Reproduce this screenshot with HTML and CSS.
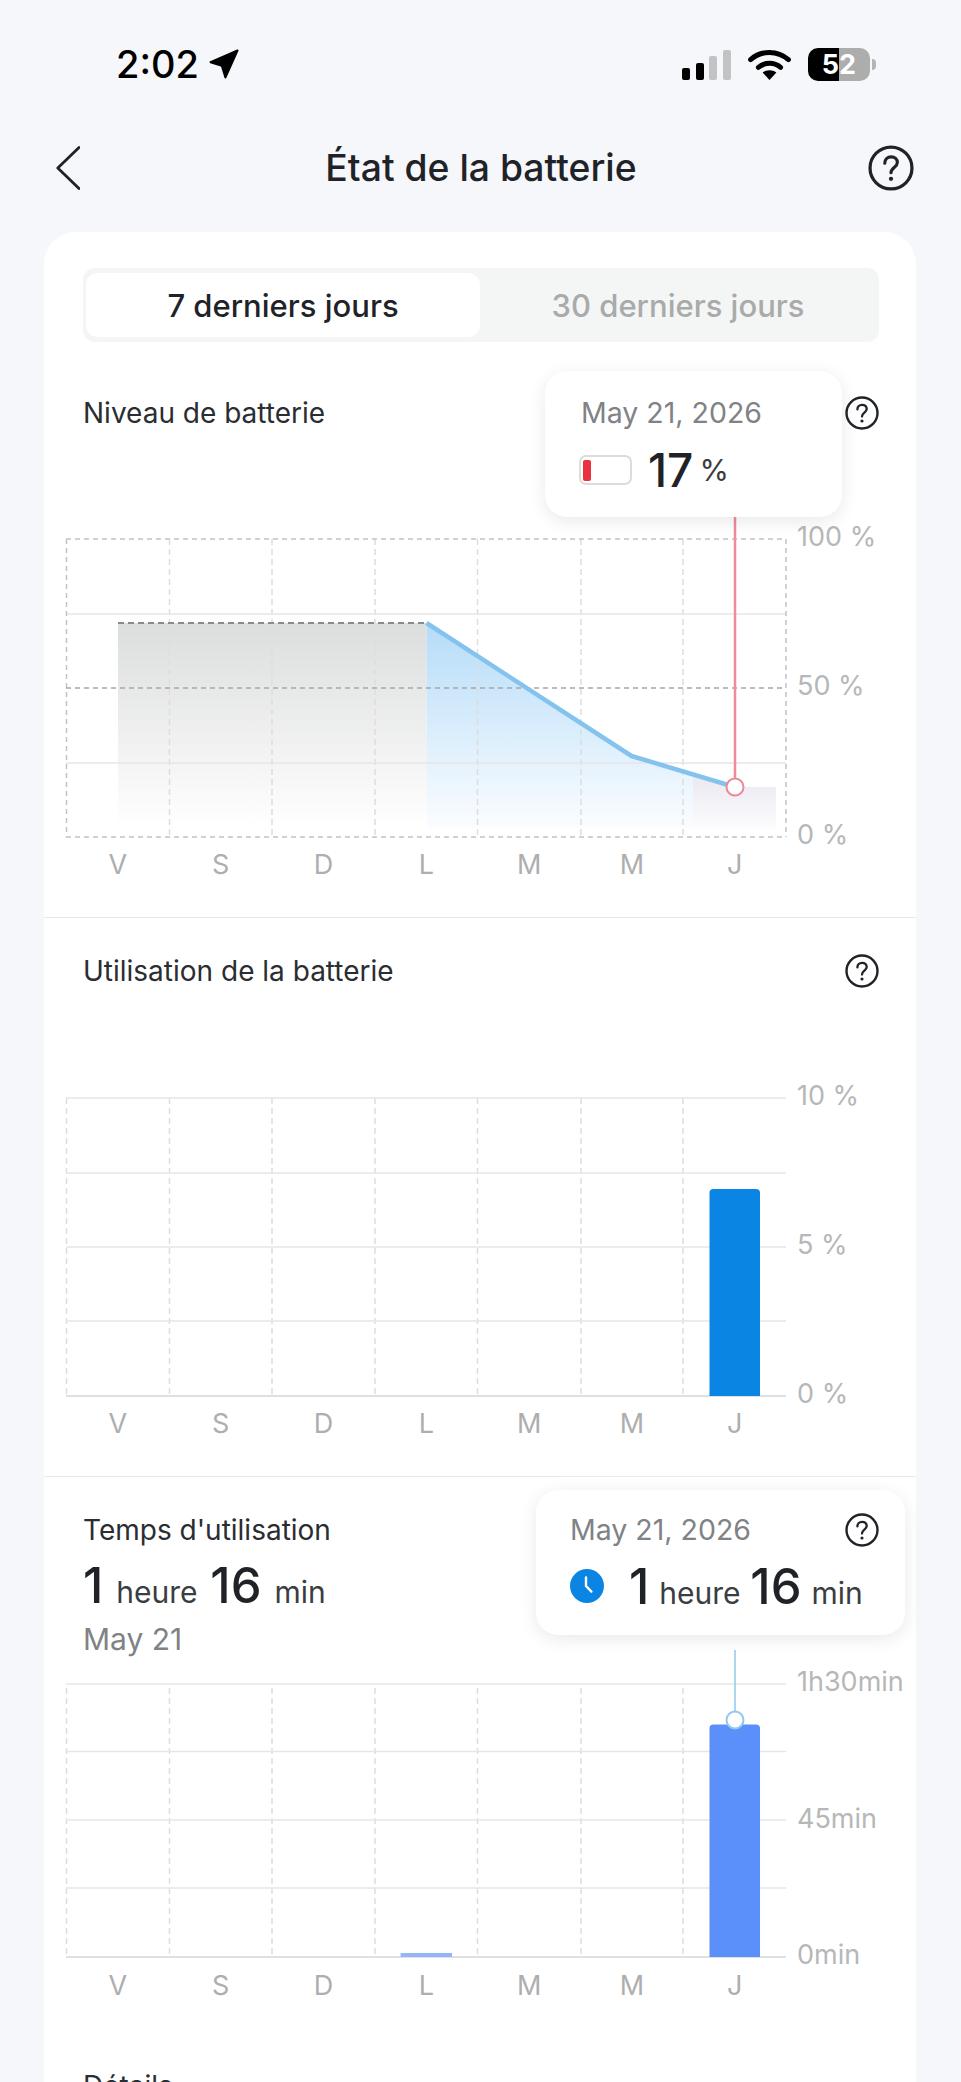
FILE: index.html
```html
<!DOCTYPE html>
<html lang="fr">
<head>
<meta charset="utf-8">
<title>État de la batterie</title>
<link rel="stylesheet" href="styles.css">
</head>
<body>
<svg class="defs" width="0" height="0" aria-hidden="true">
  <defs>
    <symbol id="help" viewBox="0 0 34 34">
      <circle cx="17" cy="17" r="15.5" fill="none" stroke="#1f2328" stroke-width="2.4"/>
      <path d="M12.4 13.4c0-2.8 2-4.6 4.7-4.6s4.6 1.7 4.6 4.1c0 3.6-4.7 3.9-4.7 7.6" fill="none" stroke="#1f2328" stroke-width="2.3" stroke-linecap="round"/>
      <circle cx="17" cy="25" r="1.6" fill="#1f2328"/>
    </symbol>
    <linearGradient id="grayFill" x1="0" y1="0" x2="0" y2="1">
      <stop offset="0" stop-color="#dcdddd"/><stop offset="1" stop-color="#ffffff"/>
    </linearGradient>
    <linearGradient id="blueFill" x1="0" y1="0" x2="0" y2="1">
      <stop offset="0" stop-color="#b5dcf8"/><stop offset="1" stop-color="#fbfdff"/>
    </linearGradient>
    <linearGradient id="pinkFill" x1="0" y1="0" x2="0" y2="1">
      <stop offset="0" stop-color="#eae8f0"/><stop offset="1" stop-color="#fcfbfd"/>
    </linearGradient>
  </defs>
</svg>

<header class="status">
  <div class="status-left">
    <span class="clock">2:02</span>
    <svg class="loc" width="30" height="30" viewBox="0 0 30 30"><path d="M28.5 1.5 1.5 13.2l11.3 3.6 3.6 11.7z" fill="#000" stroke="#000" stroke-width="2" stroke-linejoin="round"/></svg>
  </div>
  <div class="status-right">
    <svg class="signal" width="49" height="30" viewBox="0 0 49 30">
      <rect x="0" y="18" width="8" height="12" rx="2" fill="#000"/>
      <rect x="14" y="13" width="8" height="17" rx="2" fill="#000"/>
      <rect x="27" y="6" width="8" height="24" rx="2" fill="#c2c3c5"/>
      <rect x="41" y="0" width="8" height="30" rx="2" fill="#c2c3c5"/>
    </svg>
    <svg class="wifi" width="43" height="31" viewBox="0 0 43 31">
      <path d="M2.6 10.6C13.4 1 29.6 1 40.4 10.6" fill="none" stroke="#000" stroke-width="5" stroke-linecap="round"/>
      <path d="M10.4 18.4c6.6-5.4 15.6-5.4 22.2 0" fill="none" stroke="#000" stroke-width="5" stroke-linecap="round"/>
      <path d="M14.6 23.6c4.2-3 9.6-3 13.8 0L21.5 31z" fill="#000"/>
    </svg>
    <div class="batt">52</div>
  </div>
</header>

<nav class="nav">
  <svg class="back" width="24" height="44" viewBox="0 0 24 44"><path d="M23 1.5 1.8 22 23 42.5" fill="none" stroke="#1f2328" stroke-width="2.8" stroke-linecap="round" stroke-linejoin="round"/></svg>
  <h1 class="nav-title">État de la batterie</h1>
  <svg class="help-big" width="46" height="46"><use href="#help"/></svg>
</nav>

<main class="card">
  <section class="section first">
    <div class="segment">
      <div class="seg on">7 derniers jours</div>
      <div class="seg">30 derniers jours</div>
    </div>
    <div class="head level-head">
      <span class="title">Niveau de batterie</span>
      <svg class="help" width="34" height="34"><use href="#help"/></svg>
    </div>
    <div class="tip tip-level">
      <div class="tip-date">May 21, 2026</div>
      <div class="tip-value">
        <span class="cell"><i></i></span>
        <span class="big">17</span><span class="unit">%</span>
      </div>
    </div>
    <div class="chart level-chart">
      <svg class="plot" width="724" height="322" viewBox="0 0 724 322">
        <rect x="52" y="98" width="308.5" height="205" fill="url(#grayFill)"/>
        <path d="M360.5 98 565.5 231 627 249V303H360.5z" fill="url(#blueFill)"/>
        <path d="M627 249 669 262H710V303H627z" fill="url(#pinkFill)"/>
        <path class="v-grid" d="M103.5 14V312M206 14V312M309 14V312M411.5 14V312M515 14V312M617 14V312"/>
        <path class="h-solid" d="M0 89H720M0 238H720"/>
        <path class="h-dash" d="M0 14H720M0 312H720M.5 14V312M720 14V312"/>
        <path class="h-mid" d="M0 163H720"/>
        <path class="top-dash" d="M52 98H360.5"/>
        <path class="line" d="M360.5 98 565.5 231 669 262"/>
        <path class="pin-red" d="M669 -8V254"/>
        <circle class="dot-red" cx="669" cy="262" r="8.5"/>
      </svg>
      <div class="y-axis"><span>100 %</span><span>50 %</span><span>0 %</span></div>
    </div>
    <div class="x-axis"><span>V</span><span>S</span><span>D</span><span>L</span><span>M</span><span>M</span><span>J</span></div>
  </section>

  <section class="section">
    <div class="head">
      <span class="title">Utilisation de la batterie</span>
      <svg class="help" width="34" height="34"><use href="#help"/></svg>
    </div>
    <div class="chart usage-chart">
      <svg class="plot" width="724" height="322" viewBox="0 0 724 322">
        <path class="v-grid" d="M.5 14V312M103.5 14V312M206 14V312M309 14V312M411.5 14V312M515 14V312M617 14V312"/>
        <path class="h-solid" d="M0 14H720M0 89H720M0 163H720M0 237H720"/>
        <path class="h-base" d="M0 312H720"/>
        <path d="M643.5 312V109a4 4 0 0 1 4-4h42.5a4 4 0 0 1 4 4V312z" fill="#0b85e3"/>
      </svg>
      <div class="y-axis"><span>10 %</span><span>5 %</span><span>0 %</span></div>
    </div>
    <div class="x-axis"><span>V</span><span>S</span><span>D</span><span>L</span><span>M</span><span>M</span><span>J</span></div>
  </section>

  <section class="section last">
    <div class="tip tip-time">
      <div class="tip-date">May 21, 2026</div>
      <div class="tip-value">
        <svg class="clock-ico" width="34" height="34" viewBox="0 0 34 34"><circle cx="17" cy="17" r="17" fill="#0b85e3"/><path d="M16 8.5V17l5.4 5.6" fill="none" stroke="#fff" stroke-width="2.4" stroke-linecap="round" stroke-linejoin="round"/></svg>
        <span class="duration"><span class="big">1</span> <span class="unit">heure</span> <span class="big">16</span> <span class="unit">min</span></span>
      </div>
    </div>
    <div class="head">
      <span class="title">Temps d'utilisation</span>
      <svg class="help" width="34" height="34"><use href="#help"/></svg>
    </div>
    <div class="total duration"><span class="big">1</span> <span class="unit">heure</span> <span class="big">16</span> <span class="unit">min</span></div>
    <div class="day">May 21</div>
    <div class="chart time-chart">
      <svg class="plot" width="724" height="297" viewBox="0 0 724 297">
        <path class="v-grid" d="M.5 18V287M103.5 18V287M206 18V287M309 18V287M411.5 18V287M515 18V287M617 18V287"/>
        <path class="h-solid" d="M0 14H720M0 81.500H720M0 150H720M0 218H720"/>
        <path class="h-base" d="M0 287H720"/>
        <rect x="334.600" y="283" width="51.400" height="4" fill="#94b6f8"/>
        <path d="M643.5 287V58.500a4 4 0 0 1 4-4h42.500a4 4 0 0 1 4 4V287z" fill="#5b8ff9"/>
        <path class="pin-blue" d="M669 -20V42"/>
        <circle class="dot-blue" cx="669" cy="50" r="8.500"/>
      </svg>
      <div class="y-axis"><span>1h30min</span><span>45min</span><span>0min</span></div>
    </div>
    <div class="x-axis time-days"><span>V</span><span>S</span><span>D</span><span>L</span><span>M</span><span>M</span><span>J</span></div>
    <div class="head details"><span class="title">Détails</span></div>
  </section>
</main>
</body>
</html>
```

FILE: styles.css
```css
* { box-sizing: border-box; }
html, body { margin: 0; padding: 0; height: 2082px; overflow: hidden; }
body {
  background: #f5f7fb;
  color: #1f2328;
  font-family: Inter, "Noto Sans", sans-serif;
}
.defs { position: absolute; }

.status {
  height: 100px;
  padding: 47px 91px 0 116px;
  display: flex;
  justify-content: space-between;
  align-items: flex-start;
}
.status-left { display: flex; align-items: center; gap: 10px; height: 34px; }
.clock { font-size: 38px; font-weight: 500; color: #000; line-height: 34px; }
.status-right { display: flex; align-items: center; gap: 17px; height: 34px; }
.signal { margin-top: 2px; }
.batt {
  position: relative;
  width: 62px;
  height: 33px;
  border-radius: 10px;
  background: linear-gradient(90deg, #000 50%, #adadad 50%);
  color: #fff;
  font-size: 27px;
  font-weight: 700;
  line-height: 33px;
  text-align: center;
}
.batt::after {
  content: "";
  position: absolute;
  left: 64px;
  top: 11px;
  width: 4px;
  height: 11px;
  border-radius: 0 4px 4px 0;
  background: #b4b4b4;
}

.nav {
  height: 68px;
  margin: 34px 0 30px;
  padding: 0 47px 0 56px;
  display: grid;
  grid-template-columns: 1fr auto 1fr;
  align-items: center;
}
.back { display: block; }
.help-big { justify-self: end; display: block; }
.nav-title { margin: 0 8px 0 0; font-size: 37.3px; font-weight: 500; line-height: 68px; }

.card {
  margin: 0 45px 0 44px;
  background: #fff;
  border-radius: 32px 32px 0 0;
}
.section {
  position: relative;
  padding: 35px 0 40px;
  border-bottom: 1px solid #e8e8e8;
}
.section.first { padding-top: 36px; }
.section.last { border-bottom: 0; padding-bottom: 0; }

.segment {
  display: grid;
  grid-template-columns: 394px 1fr;
  height: 74px;
  margin: 0 37px 0 39px;
  padding: 5px 3px;
  background: #f4f5f5;
  border-radius: 12px;
}
.seg {
  display: flex;
  align-items: center;
  justify-content: center;
  font-size: 31px;
  font-weight: 500;
  color: #a9aaaa;
}
.seg.on { background: #fff; border-radius: 12px; color: #1f2328; }

.head {
  display: flex;
  justify-content: space-between;
  align-items: center;
  height: 36px;
  padding: 0 37px 0 39px;
}
.level-head { margin-top: 53px; }
.title { font-size: 28px; line-height: 36px; color: #2a2d31; }
.help { position: relative; z-index: 2; display: block; }

.tip {
  position: absolute;
  background: #fff;
  border-radius: 22px;
  box-shadow: 0 4px 18px rgba(0, 0, 0, .09);
  z-index: 1;
}
.tip-level { left: 501px; top: 139px; width: 297px; height: 146px; padding: 24px 36px 0; }
.tip-time { left: 492px; top: 13px; width: 369px; height: 145px; padding: 22px 37px 0 34px; }
.tip-date { font-size: 28.5px; line-height: 36px; color: #808285; }
.tip-value { display: flex; align-items: center; margin-top: 14px; height: 50px; }
.tip-time .tip-value { margin-top: 13px; }
.cell {
  width: 53px;
  height: 30px;
  margin: 0 16px 0 -2px;
  border: 2px solid #dcdcdc;
  border-radius: 7px;
  display: block;
}
.cell i {
  display: block;
  width: 8px;
  height: 21px;
  margin: 3px 0 0 2px;
  border-radius: 2px;
  background: #e8323f;
}
.clock-ico { margin-right: 25px; flex: none; }
.duration { white-space: nowrap; font-size: 28px; word-spacing: 2px; }

.big { font-size: 46px; font-weight: 500; color: #1f2328; }
.duration .big { font-size: 49px; }
.unit { font-size: 30px; color: #3a3d41; }
.tip-value > .unit { margin-left: 6px; }

.total { padding-left: 39px; margin-top: 14px; height: 48px; line-height: 48px; word-spacing: 5px; }
.day { padding-left: 39px; margin-top: 13px; font-size: 30px; line-height: 32px; color: #808285; }

.chart { display: flex; margin-left: 22px; }
.level-chart { margin-top: 94px; }
.usage-chart { margin-top: 95px; }
.time-chart { margin-top: 15px; }
.plot { display: block; flex: none; overflow: visible; }
.y-axis {
  display: flex;
  flex-direction: column;
  justify-content: space-between;
  margin-left: 7px;
  font-size: 27px;
  line-height: 24px;
  color: #b6b7b8;
  white-space: nowrap;
}
.x-axis {
  display: grid;
  grid-template-columns: repeat(7, 102.8px);
  margin: 6px 0 0 22.5px;
  font-size: 27px;
  line-height: 24px;
  color: #adaeaf;
  text-align: center;
}
.time-days { margin-top: 7px; }
.details { margin-top: 70px; }

.v-grid { fill: none; stroke: #dddddd; stroke-width: 1.5; stroke-dasharray: 6 4; }
.h-solid { fill: none; stroke: #e6e6e6; stroke-width: 1.5; }
.h-base { fill: none; stroke: #dfe0e2; stroke-width: 2; }
.h-dash { fill: none; stroke: #c2c2c2; stroke-width: 1.5; stroke-dasharray: 5 4; }
.h-mid { fill: none; stroke: #a8a8a8; stroke-width: 1.5; stroke-dasharray: 5 4; }
.top-dash { fill: none; stroke: #8a8a8a; stroke-width: 2; stroke-dasharray: 6 4; }
.line { fill: none; stroke: #85c3ef; stroke-width: 4.5; stroke-linejoin: round; }
.pin-red { fill: none; stroke: #ef8b9b; stroke-width: 2.5; }
.dot-red { fill: #fff; stroke: #e98a9a; stroke-width: 2; }
.pin-blue { fill: none; stroke: #8fc8f0; stroke-width: 1.5; }
.dot-blue { fill: #fff; stroke: #8fc8f0; stroke-width: 2; }
```
